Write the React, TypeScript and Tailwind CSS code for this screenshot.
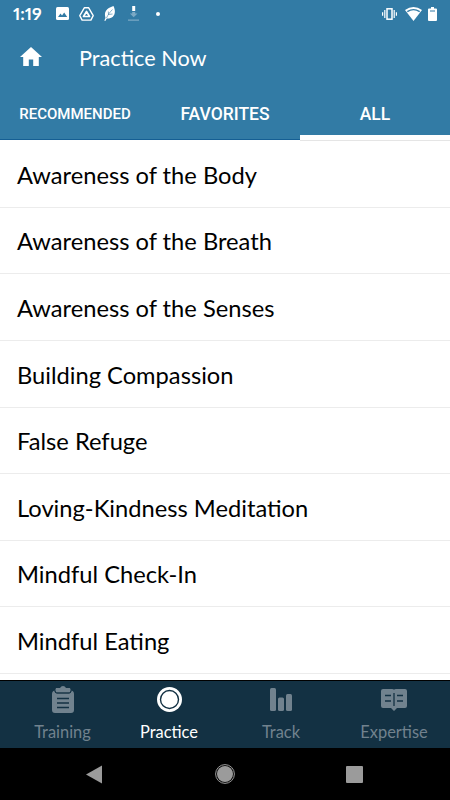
import { useState } from 'react';

const PRACTICES = [
  'Awareness of the Body',
  'Awareness of the Breath',
  'Awareness of the Senses',
  'Building Compassion',
  'False Refuge',
  'Loving-Kindness Meditation',
  'Mindful Check-In',
  'Mindful Eating',
];

export default function App() {
  const [tab, setTab] = useState('ALL');

  return (
    <div className="flex h-[800px] w-[450px] flex-col overflow-hidden bg-white font-['Lato',sans-serif]">
      {/* Header */}
      <header className="flex h-[140px] shrink-0 flex-col border-b border-[#155f94] bg-[#327ba5] text-white">
        <StatusBar />
        <div className="flex h-[62px] items-center pl-5">
          <svg className="mb-[3px] h-[19px] w-[22px]" viewBox="0 0 22 19" fill="currentColor">
            <path d="M11 0 0 10h3.2v9h5.600v-6.500h4.400V19h5.600v-9H22z" />
          </svg>
          <h1 className="ml-[37px] text-[21.7px] leading-7">Practice Now</h1>
        </div>
        <div className="grid flex-1 grid-cols-3 font-['Roboto',sans-serif] font-medium">
          <Tab label="RECOMMENDED" small active={tab === 'RECOMMENDED'} onClick={setTab} />
          <Tab label="FAVORITES" active={tab === 'FAVORITES'} onClick={setTab} />
          <Tab label="ALL" active={tab === 'ALL'} onClick={setTab} />
        </div>
      </header>

      <main className="h-[540px] shrink-0 overflow-hidden bg-white pt-[1.2px] text-black">
        {PRACTICES.map((name) => (
          <div key={name} className="flex h-[66.6px] items-center border-b border-[#ececec] pl-[17px] pt-[1.5px] text-[23.7px] leading-8">
            {name}
          </div>
        ))}
      </main>

      {/* Bottom navigation */}
      <nav className="grid h-[68px] shrink-0 grid-cols-[125px_88px_136px_90px] border-t border-black bg-[#133143] text-[#71828e]">
        <NavItem label="Training">
          <svg className="h-[27px] w-[22px]" viewBox="0 0 22 27">
            <path fill="currentColor" d="M0 8q0-3 2.500-3.500Q2.800 7.500 5 7.500h12q2.200 0 2.500-3Q22 5 22 8v16q0 3-3 3H3q-3 0-3-3z" />
            <path fill="currentColor" d="M4 2h4q1-2 3-2t3 2h4q1.500 2.200 0 4.500H4Q2.500 4.200 4 2z" />
            <path fill="none" stroke="#133143" strokeWidth=".8" d="M2.800 4.500Q3 7 5 7h12q2 0 2.200-2.500" />
            <path stroke="#133143" strokeWidth="1.500" d="M5 12.500h12M5 17h12M5 21.500h12" />
          </svg>
        </NavItem>
        <NavItem label="Practice" active>
          <svg className="h-[25px] w-[25px]" viewBox="0 0 25 25">
            <circle cx="12.500" cy="12.500" r="12.500" fill="currentColor" />
            <circle cx="12.500" cy="12.500" r="9" fill="none" stroke="#133143" strokeWidth="1.400" />
          </svg>
        </NavItem>
        <NavItem label="Track">
          <svg className="h-[23px] w-[22px]" viewBox="0 0 22 23" fill="currentColor">
            <rect width="6" height="23" rx="1.500" />
            <rect x="8" y="9.500" width="6" height="13.500" rx="1.500" />
            <rect x="16" y="6" width="6" height="17" rx="1.500" />
          </svg>
        </NavItem>
        <NavItem label="Expertise">
          <svg className="h-[22px] w-[26px]" viewBox="0 0 26 22">
            <path fill="currentColor" d="M2 0h9q2 0 2 1 0-1 2-1h9q2 0 2 2v15q0 2-2 2h-8l-3 3-3-3H2q-2 0-2-2V2q0-2 2-2z" />
            <path fill="none" stroke="#133143" strokeWidth="1.300" d="M13 4v13M4 6.500h6M4 12h6M16 6.500h6M16 12h6" />
          </svg>
        </NavItem>
      </nav>

      {/* System buttons */}
      <footer className="flex h-[52px] shrink-0 items-center bg-black pl-[86px] text-[#9b9b9b]">
        <svg className="h-[19px] w-4" viewBox="0 0 16 19" fill="currentColor">
          <path d="M16 .5v18L0 9.500z" />
        </svg>
        <svg className="ml-[113px] h-5 w-5" viewBox="0 0 20 20">
          <circle cx="10" cy="10" r="8" fill="currentColor" />
          <circle cx="10" cy="10" r="9.400" fill="none" stroke="currentColor" strokeWidth="1" />
        </svg>
        <div className="ml-[111px] size-[17px] rounded-[1px] bg-current" />
      </footer>
    </div>
  );
}

function StatusBar() {
  return (
    <div className="flex h-[27px] items-center pl-[13px]">
      <span className="w-[43px] text-[17.5px] font-bold leading-5 proportional-nums">1:19</span>
      <svg className="h-[13px] w-[13px]" viewBox="0 0 13 13">
        <rect width="13" height="13" rx="1.500" fill="currentColor" />
        <path fill="#327ba5" d="m2 10 2.500-3.500L6 8.500l2.200-3L11.200 10z" />
      </svg>
      <svg className="ml-[10px] h-[14px] w-[15px]" viewBox="0 0 15 14" fill="none" stroke="currentColor" strokeWidth="1.400" strokeLinejoin="round">
        <path d="M5.300.8h4.400L14.200 8.600l-2.300 4.500H3.100L.8 8.600z" />
        <path strokeWidth="1.700" d="M7.500 4.500 4.500 9.500h6z" />
      </svg>
      <svg className="ml-[10px] h-[15px] w-3" viewBox="0 0 12 15">
        <path fill="currentColor" d="M9.500 0C3 2-.5 5.500 1.500 12L.3 14.500l1 .4L2.800 12.600C9.500 13 13 7.500 9.500 0z" />
        <path fill="none" stroke="#327ba5" strokeWidth=".6" d="M2.500 12C4 8.500 6 6 8.500 3.500M4.500 8.500 4.300 5.500M4.500 8.500l4-.5" />
      </svg>
      <svg className="ml-3 h-[15px] w-[11px]" viewBox="0 0 11 15">
        <path fill="white" d="M4.200 0h3v5h-3z" />
        <path fill="#7ba9c5" d="M4.200 6h3v1.500h2.300l-3.800 3.800-3.800-3.800h2.300zM0 13.500h11v1.300H0z" />
      </svg>
      <span className="ml-[17px] size-1 rounded-full bg-white" />
      <svg className="ml-[222px] h-3 w-[15px]" viewBox="0 0 15 12" fill="none" stroke="currentColor">
        <rect x="5" y=".8" width="5" height="10.400" strokeWidth="1.500" />
        <path strokeWidth="1.200" d="M2.800 2v8M12.200 2v8M.6 4.300v3.400M14.400 4.300v3.400" />
      </svg>
      <svg className="ml-2 h-[14px] w-[17px]" viewBox="0 0 17 14">
        <path fill="currentColor" d="M0 3q8.500-6 17 0L8.500 14z" />
        <path fill="none" stroke="#327ba5" strokeWidth="1.300" d="M2.300 4.600q6.200-4 12.400 0" />
      </svg>
      <svg className="ml-1.5 h-[14px] w-[9px]" viewBox="0 0 9 14">
        <path fill="currentColor" d="M3 0h3v1.500h2q1 0 1 1V13q0 1-1 1H1q-1 0-1-1V2.500q0-1 1-1h2z" />
        <path stroke="#327ba5" d="M2 4h5" />
      </svg>
    </div>
  );
}

function Tab({
  label, small, active, onClick,
}: {
  label: string;
  small?: boolean;
  active: boolean;
  onClick: (label: string) => void;
}) {
  return (
    <button
      onClick={() => onClick(label)}
      className={`relative flex items-center justify-center pt-px ${small ? 'text-[15px]' : 'text-[17.5px]'}`}
    >
      {label}
      {active && <span className="absolute inset-x-0 -bottom-[2px] h-[6px] border-b border-[#e5e5e5] bg-white" />}
    </button>
  );
}

function NavItem({
  label, active, children,
}: {
  label: string;
  active?: boolean;
  children: React.ReactNode;
}) {
  return (
    <button className={`flex flex-col items-center text-[16.4px] leading-5 ${active ? 'text-white' : ''}`}>
      <span className="mt-[5px] flex h-[27px] items-center">{children}</span>
      <span className="mt-[9px]">{label}</span>
    </button>
  );
}
